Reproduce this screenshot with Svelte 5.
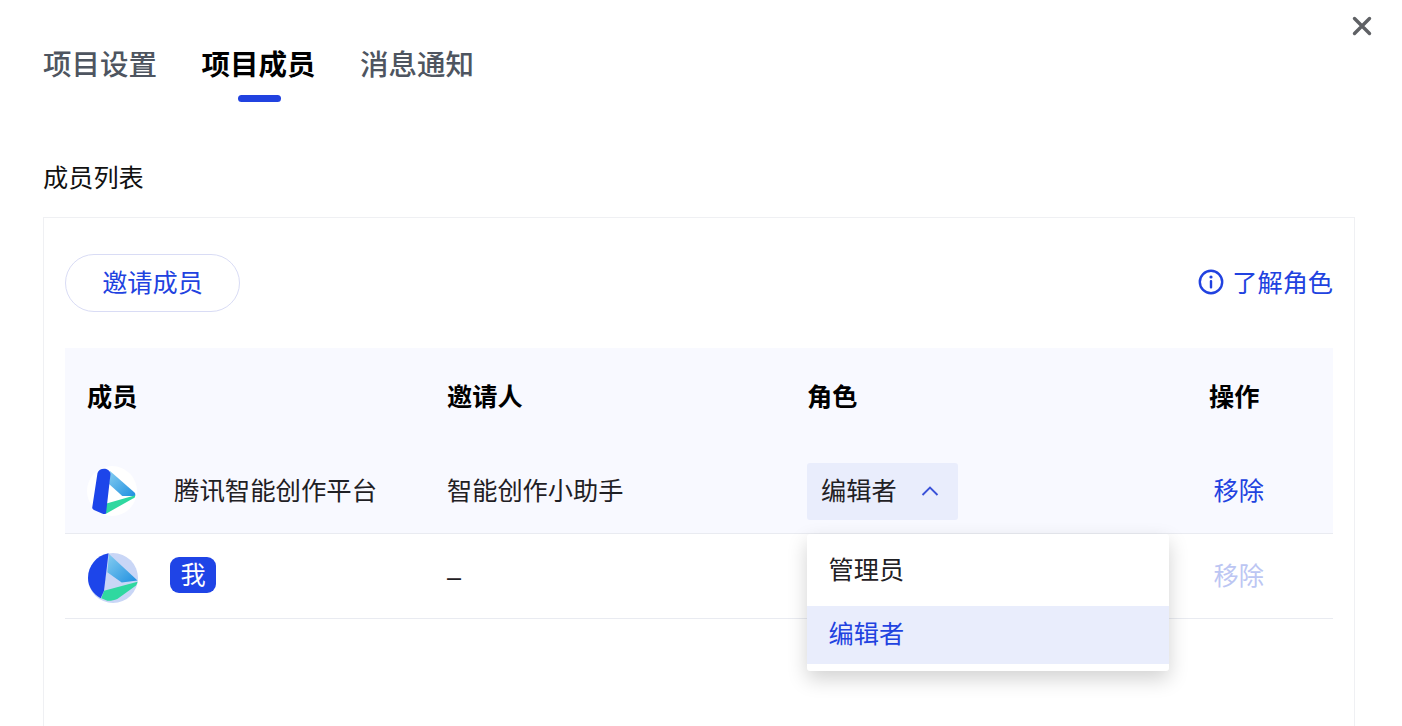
<script>
	const tabs = ['项目设置', '项目成员', '消息通知'];
	let active = 1;
	let roleOpen = true;
</script>

<div class="page">
	<button class="close" aria-label="关闭">
		<svg width="20" height="20" viewBox="0 0 20 20"><path d="M2.5 2.5 17.5 17.5M17.5 2.5 2.5 17.5" stroke="#5f6165" stroke-width="3.4" stroke-linecap="round" fill="none"/></svg>
	</button>

	<div class="tabs">
		{#each tabs as tab, i}
			<div class="tab" class:active={i === active}>{tab}</div>
		{/each}
	</div>

	<div class="section-title">成员列表</div>

	<div class="card">
		<div class="toolbar">
			<button class="invite">邀请成员</button>
			<div class="learn">
				<svg width="26" height="26" viewBox="0 0 26 26">
					<circle cx="13" cy="13" r="11.2" stroke="#2142e0" stroke-width="2.4" fill="none"/>
					<circle cx="13" cy="8" r="1.6" fill="#2142e0"/>
					<rect x="11.8" y="11" width="2.4" height="8.5" rx="1" fill="#2142e0"/>
				</svg>
				<span>了解角色</span>
			</div>
		</div>

		<div class="table">
			<div class="row head">
				<div>成员</div>
				<div>邀请人</div>
				<div>角色</div>
				<div>操作</div>
			</div>

			<div class="row first">
				<div class="member">
					<svg class="logo" width="50" height="50" viewBox="0 0 50 50">
						<defs>
							<linearGradient id="a1" x1="0" y1="0" x2="1" y2="1">
								<stop offset="0" stop-color="#86cdf0"/>
								<stop offset="1" stop-color="#1f8fe0"/>
							</linearGradient>
						</defs>
						<circle cx="25" cy="25" r="25" fill="#fff"/>
						<path d="M23 5 47.5 26.5C48.5 27.5 48.5 29 48 30L35.3 30 22 18Z" fill="url(#a1)"/>
						<path d="M18.7 37.7 48.3 29.3 48 31C47.8 31.5 47 32 46 32.5L19 47.7Z" fill="#2fd8a0"/>
						<path d="M10.5 7C12 1.5 22.5 1 23.5 8L19 47.5C18 48.5 16.5 48 15 47.5L7 44C5.5 43.3 5 42 5.3 41Z" fill="#1d45ea"/>
					</svg>
					<span class="name">腾讯智能创作平台</span>
				</div>
				<div class="cell">智能创作小助手</div>
				<div>
					<div class="role">
						<span>编辑者</span>
						<svg width="18" height="10" viewBox="0 0 18 10"><path d="M1.5 9 9 1.5 16.5 9" stroke="#3a52d8" stroke-width="1.9" fill="none"/></svg>
					</div>
				</div>
				<div class="remove">移除</div>
			</div>

			<div class="row second">
				<div class="member">
					<svg class="logo me-logo" width="50" height="50" viewBox="0 0 50 50">
						<defs>
							<linearGradient id="a2" x1="0" y1="0" x2="1" y2="1">
								<stop offset="0" stop-color="#86cdf0"/>
								<stop offset="1" stop-color="#1f8fe0"/>
							</linearGradient>
						</defs>
						<circle cx="25" cy="25" r="25" fill="#c9d6f6"/>
						<path d="M21 1 49.5 27.5 33.7 29.5 19.3 19.3Z" fill="url(#a2)"/>
						<path d="M16 37.7 49.5 28.7C49.3 30 48.5 32 47.7 32.7L29.3 46C26 47.5 22 48 19.3 47.7L13.3 45.3Z" fill="#2fd8a0"/>
						<path d="M20.5 .3 16 37.7 12.7 45.3C5 41 0 33.5 0 25 0 13 8.5 2.5 20.5 .3Z" fill="#1d45ea"/>
					</svg>
					<span class="me">我</span>
				</div>
				<div class="dash">–</div>
				<div></div>
				<div class="remove disabled">移除</div>
			</div>

			{#if roleOpen}
				<div class="menu">
					<div class="option">管理员</div>
					<div class="option selected">编辑者</div>
				</div>
			{/if}
		</div>
	</div>
</div>

<style>
	:global(body) {
		margin: 0;
		background: #fff;
		overflow: hidden;
	}

	.page {
		position: relative;
		height: 726px;
		overflow: hidden;
		box-sizing: border-box;
		padding: 44px 47px 0 43px;
		font-family: "Noto Sans CJK SC", "Noto Sans", sans-serif;
		font-size: 25.2px;
		color: #1f2024;
	}

	.close {
		position: absolute;
		top: 16px;
		right: 30px;
		width: 20px;
		height: 20px;
		padding: 0;
		border: none;
		background: none;
	}

	.close svg {
		display: block;
	}

	.tabs {
		display: flex;
		gap: 44.5px;
	}

	.tab {
		position: relative;
		height: 40px;
		line-height: 38px;
		font-size: 28.5px;
		font-weight: 500;
		color: #4e5560;
	}

	.tab.active {
		color: #000;
		font-weight: 700;
	}

	.tab.active::after {
		content: "";
		position: absolute;
		left: 36px;
		bottom: -18px;
		width: 43px;
		height: 7px;
		border-radius: 4px;
		background: #2142e0;
	}

	.section-title {
		margin-top: 78px;
		height: 36px;
		line-height: 29px;
		color: #111;
	}

	.card {
		margin-top: 19px;
		height: 600px;
		box-sizing: border-box;
		padding: 36px 21px 0;
		border: 1px solid #eff0f3;
	}

	.toolbar {
		display: flex;
		justify-content: space-between;
		align-items: center;
		height: 58px;
	}

	.invite {
		width: 175px;
		height: 58px;
		padding: 0 0 4px;
		border: 1px solid #d9dcf5;
		border-radius: 29px;
		background: #fff;
		font: inherit;
		color: #2142e0;
	}

	.learn {
		display: flex;
		align-items: center;
		gap: 8px;
		color: #2142e0;
	}

	.learn svg {
		margin: 0 0 2px 1px;
	}

	.learn span {
		padding-bottom: 4px;
	}

	.table {
		position: relative;
		margin-top: 36px;
	}

	.row {
		display: grid;
		grid-template-columns: 360px 360px 402px 1fr;
		align-items: center;
		height: 85px;
		box-sizing: border-box;
		padding-left: 22px;
		border-bottom: 1px solid #e9ebf1;
	}

	.head {
		height: 100px;
		border-bottom: none;
		padding-bottom: 6px;
		background: #f8f9ff;
		font-weight: 700;
		color: #000;
	}

	.first {
		height: 86px;
		background: #f8f9ff;
	}

	.cell,
	.name,
	.role span {
		padding-bottom: 4px;
	}

	.dash {
		font-family: "Liberation Sans", sans-serif;
		padding-top: 2px;
	}

	.member {
		display: flex;
		align-items: center;
	}

	.logo {
		flex: none;
	}

	.me-logo {
		margin: 3px 0 0 1px;
	}

	.name {
		margin-left: 37px;
		font-size: 25.4px;
	}

	.me {
		margin: -2px 0 0 32px;
		width: 46px;
		height: 36px;
		line-height: 32px;
		border-radius: 9px;
		background: #1f44e6;
		color: #fff;
		text-align: center;
	}

	.role {
		display: flex;
		align-items: center;
		gap: 24px;
		box-sizing: border-box;
		width: 151px;
		height: 57px;
		margin-top: 1px;
		padding-left: 14px;
		border-radius: 3px;
		background: #e9edfc;
	}

	.remove {
		padding: 0 0 4px 4.5px;
		color: #2142e0;
	}

	.remove.disabled {
		color: #bcc6f3;
	}

	.menu {
		position: absolute;
		left: 742px;
		top: 186px;
		width: 362px;
		height: 137px;
		box-sizing: border-box;
		padding-top: 8px;
		border-radius: 3px;
		background: #fff;
		box-shadow: 0 8px 20px rgba(0, 0, 0, 0.18);
	}

	.option {
		height: 58px;
		line-height: 53px;
		padding-left: 21.5px;
	}

	.option:first-child {
		margin-bottom: 6px;
	}

	.option.selected {
		background: #e9edfc;
		color: #2142e0;
	}
</style>
